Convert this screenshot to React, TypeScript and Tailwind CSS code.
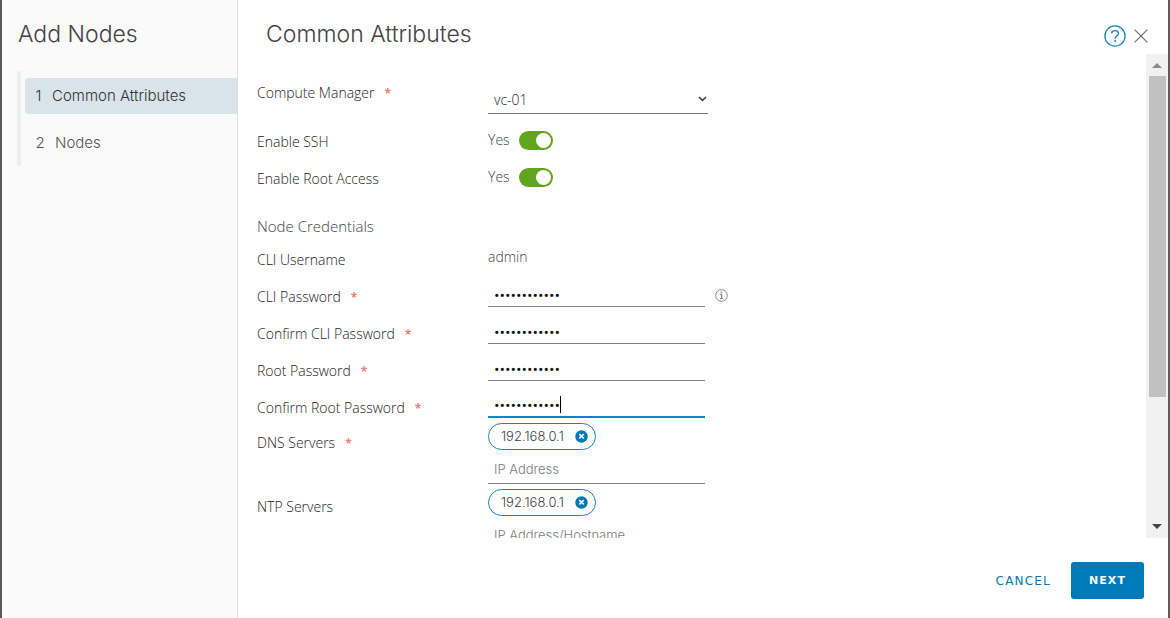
import { useState, type ReactNode } from "react";

function Required() {
  return (
    <span className="ml-[10px] text-xs font-bold text-[#ee8270]" aria-hidden="true">
      *
    </span>
  );
}

type FieldProps = {
  label: string;
  htmlFor?: string;
  required?: boolean;
  rowClass?: string;
  labelClass?: string;
  children: ReactNode;
};

function Field({
  label,
  htmlFor,
  required,
  rowClass = "h-[37px]",
  labelClass = "pt-[14px]",
  children,
}: FieldProps) {
  return (
    <div className={`flex ${rowClass}`}>
      <div className={`w-[231px] shrink-0 leading-5 text-[#1c1c1c] ${labelClass}`}>
        <label htmlFor={htmlFor}>{label}</label>
        {required && <Required />}
      </div>
      {children}
    </div>
  );
}

function Toggle({ id }: { id: string }) {
  const [on, setOn] = useState(true);
  return (
    <div className="mt-3 flex h-5 items-center gap-2 self-start text-[#444]">
      <span className="w-[23px]">{on ? "Yes" : "No"}</span>
      <input
        id={id}
        type="checkbox"
        role="switch"
        checked={on}
        onChange={() => setOn(!on)}
        className="relative h-[19px] w-[34px] appearance-none rounded-full bg-gray-400 before:absolute before:left-[3px] before:top-[2px] before:size-[15px] before:rounded-full before:bg-white checked:bg-[#62a420] checked:before:left-[17px]"
      />
    </div>
  );
}

function PasswordInput({ id, active = false }: { id: string; active?: boolean }) {
  return (
    <div
      className={`relative mt-[5px] h-[29px] w-[217px] self-start ${
        active ? "border-b-2 border-[#0f86c4]" : "border-b border-[#808080]"
      }`}
    >
      <input
        id={id}
        type="password"
        defaultValue="VMware1!VMwa"
        className="h-full w-full bg-transparent px-[6px] pt-[5px] font-['Roboto',sans-serif] text-[17px] leading-5 text-[#111] caret-transparent outline-none"
      />
      {active && <span className="absolute left-[72px] top-[7px] h-[17px] w-px bg-black" />}
    </div>
  );
}

function AddressList({ id, placeholder }: { id: string; placeholder: string }) {
  return (
    <div className="w-[217px] pt-[2px]">
      <div className="flex h-[27px] w-[108px] items-center justify-between rounded-full border border-[#0f86c4] pl-3 pr-[7px] font-['Inter',sans-serif] text-[13px] text-[#444]">
        <span>192.168.0.1</span>
        <button type="button" aria-label="Remove 192.168.0.1" className="size-[13px]">
          <svg viewBox="0 0 13 13" className="size-[13px]">
            <circle cx="6.5" cy="6.5" r="6.2" fill="#0079b8" />
            <path d="M4.3 4.2 8.7 8.4M8.7 4.2 4.3 8.4" stroke="#fff" strokeWidth="1.6" />
          </svg>
        </button>
      </div>
      <input
        id={id}
        type="text"
        placeholder={placeholder}
        className="mt-1 h-[30px] w-full border-b border-[#808080] bg-transparent px-[6px] font-['Inter',sans-serif] text-[13px] font-light outline-none placeholder:text-[#7c7c7c]"
      />
    </div>
  );
}

export default function App() {
  return (
    <div
      role="dialog"
      aria-label="Add Nodes"
      className="flex h-screen overflow-hidden border-x-2 border-[#5a5a5a] bg-white font-['Open_Sans',sans-serif] text-sm font-light"
    >
      <aside className="w-[236px] shrink-0 border-r border-[#ddd] bg-[#fafafa] font-['Inter',sans-serif]">
        <h1 className="pl-4 pt-[18px] text-[23px] leading-8 text-[#444]">Add Nodes</h1>
        <nav className="ml-[15px] mt-[21px] flex h-[95px] flex-col gap-[11px] border-l-4 border-[#eee] pl-1 pt-[7px] text-[15px]">
          <button
            type="button"
            aria-current="step"
            className="flex h-[36px] shrink-0 items-center gap-[10px] rounded-l-sm bg-[#d9e4ea] pl-[10px] text-[#333]"
          >
            <span className="w-[7px]">1</span>
            <span>Common Attributes</span>
          </button>
          <button
            type="button"
            className="flex h-[36px] shrink-0 items-center gap-[10px] pl-[10px] text-[#565656]"
          >
            <span className="w-[10px]">2</span>
            <span>Nodes</span>
          </button>
        </nav>
      </aside>

      <main className="flex min-w-0 flex-1 flex-col">
        <header className="flex h-[54px] shrink-0 justify-between pl-7 pr-5 pt-[18px] font-['Inter',sans-serif]">
          <h2 className="text-[23px] leading-8 text-[#444]">Common Attributes</h2>
          <div className="flex h-[35px] items-center gap-2">
            <button type="button" aria-label="Help" className="size-[22px]">
              <svg viewBox="0 0 22 22" className="size-[22px]" fill="none" stroke="#1a80bf">
                <circle cx="11" cy="11" r="10.1" strokeWidth="1.3" />
                <path d="M7.6 8.3C8 6.4 9.4 5.6 11.1 5.6c2 0 3.4 1.1 3.4 2.8 0 2.4-3.2 2.4-3.2 5" strokeWidth="1.4" />
                <circle cx="11.2" cy="16" r="1" fill="#1a80bf" stroke="none" />
              </svg>
            </button>
            <button type="button" aria-label="Close" className="size-[14px]">
              <svg viewBox="0 0 14 14" className="size-[14px]" stroke="#707070" strokeWidth="1.2">
                <path d="M.6.6 13.4 13.4M13.4.6.6 13.4" />
              </svg>
            </button>
          </div>
        </header>

        <div className="flex min-h-0 flex-1">
          <form className="min-w-0 flex-1 overflow-hidden pl-[19px] pt-[15px]">
            <Field label="Compute Manager" htmlFor="compute-manager" required rowClass="h-[49px]">
              <div className="relative mt-[17px] h-[28px] w-[220px]">
                <select
                  id="compute-manager"
                  className="h-[28px] w-full appearance-none border-b border-[#707070] bg-transparent px-[6px] text-[#222] outline-none"
                >
                  <option>vc-01</option>
                </select>
                <svg
                  viewBox="0 0 9 6"
                  className="pointer-events-none absolute right-px top-[10px] h-[6px] w-[9px]"
                  fill="none"
                  stroke="#444"
                  strokeWidth="1.5"
                >
                  <path d="M1 1 4.5 4.4 8 1" />
                </svg>
              </div>
            </Field>
            <Field label="Enable SSH" htmlFor="enable-ssh">
              <Toggle id="enable-ssh" />
            </Field>
            <Field label="Enable Root Access" htmlFor="enable-root">
              <Toggle id="enable-root" />
            </Field>

            <h3 className="mt-6 h-5 text-[15px] leading-5 text-[#444]">Node Credentials</h3>

            <Field label="CLI Username">
              <span className="pt-[11px] leading-5 text-[#444]">admin</span>
            </Field>
            <Field label="CLI Password" htmlFor="cli-password" required>
              <PasswordInput id="cli-password" />
              <button type="button" aria-label="Password requirements" className="ml-[10px] mt-4 size-[13px]">
                <svg viewBox="0 0 13 13" className="size-[13px]" fill="none" stroke="#888">
                  <circle cx="6.5" cy="6.5" r="5.8" />
                  <path d="M5.2 5.6H6.6V9.6M4.9 9.7H8.2" strokeWidth="1.2" />
                  <circle cx="6.4" cy="3.5" r=".9" fill="#888" stroke="none" />
                </svg>
              </button>
            </Field>
            <Field label="Confirm CLI Password" htmlFor="confirm-cli" required>
              <PasswordInput id="confirm-cli" />
            </Field>
            <Field label="Root Password" htmlFor="root-password" required>
              <PasswordInput id="root-password" />
            </Field>
            <Field label="Confirm Root Password" htmlFor="confirm-root" required>
              <PasswordInput id="confirm-root" active />
            </Field>
            <Field label="DNS Servers" htmlFor="dns" required rowClass="h-[66px]" labelClass="pt-3">
              <AddressList id="dns" placeholder="IP Address" />
            </Field>
            <Field label="NTP Servers" htmlFor="ntp" rowClass="h-[66px]" labelClass="pt-[10px]">
              <AddressList id="ntp" placeholder="IP Address/Hostname" />
            </Field>
          </form>

          <div className="flex w-[22px] shrink-0 flex-col items-center bg-[#f1f1f1]" aria-hidden="true">
            <svg viewBox="0 0 22 22" className="h-[22px] w-full shrink-0">
              <path d="M6 14 11 9 16 14Z" fill="#8b8b8b" />
            </svg>
            <div className="flex w-[17px] flex-1 flex-col">
              <div className="basis-[73%] bg-[#c1c1c1]" />
            </div>
            <svg viewBox="0 0 22 22" className="h-[22px] w-full shrink-0">
              <path d="M6 8 11 13 16 8Z" fill="#444" />
            </svg>
          </div>
        </div>

        <footer className="flex h-20 shrink-0 items-start justify-end gap-5 pr-6 pt-6 font-['DejaVu_Sans',sans-serif]">
          <button type="button" className="h-[37px] text-xs font-normal tracking-widest text-[#0079b8]">
            CANCEL
          </button>
          <button
            type="button"
            className="h-[37px] w-[73px] rounded-[3px] bg-[#0079b8] text-[11px] font-bold tracking-widest text-white"
          >
            NEXT
          </button>
        </footer>
      </main>
    </div>
  );
}
